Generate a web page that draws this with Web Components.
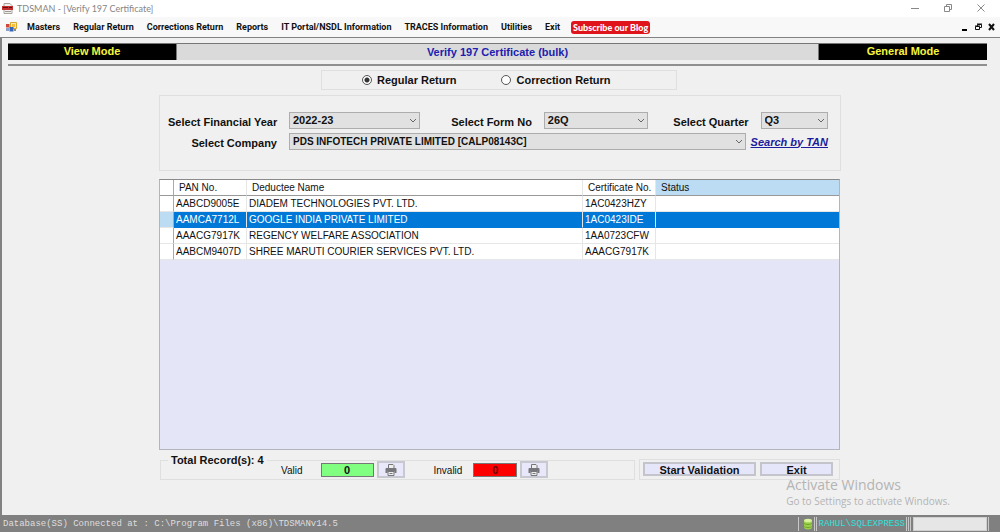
<!DOCTYPE html>
<html lang="en">
<head>
<meta charset="utf-8">
<title>TDSMAN - [Verify 197 Certificate]</title>
<style>
  html, body { margin: 0; }
  body { font: 11px/14px "Liberation Sans", Arial, sans-serif; color: #111; background: #f0f0f0; }
</style>
</head>
<body>
<app-window>
  <title-bar slot="title">TDSMAN - [Verify 197 Certificate]</title-bar>
  <menu-bar slot="menu">
    <menu-item>Masters</menu-item>
    <menu-item>Regular Return</menu-item>
    <menu-item>Corrections Return</menu-item>
    <menu-item>Reports</menu-item>
    <menu-item>IT Portal/NSDL Information</menu-item>
    <menu-item>TRACES Information</menu-item>
    <menu-item>Utilities</menu-item>
    <menu-item>Exit</menu-item>
  </menu-bar>
  <mode-banner>
    <span slot="left">View Mode</span>
    <span slot="heading">Verify 197 Certificate (bulk)</span>
    <span slot="right">General Mode</span>
  </mode-banner>
  <return-type></return-type>
  <filter-panel></filter-panel>
  <certificate-grid></certificate-grid>
  <result-panel></result-panel>
  <status-strip slot="status">Database(SS) Connected at : C:\Program Files (x86)\TDSMANv14.5
    <span slot="server">RAHUL\SQLEXPRESS</span>
  </status-strip>
</app-window>

<script>
const define = (name, html, setup) => {
  const template = document.createElement('template');
  template.innerHTML = html;
  customElements.define(name, class extends HTMLElement {
    constructor() {
      super();
      this.attachShadow({ mode: 'open' }).append(template.content.cloneNode(true));
      if (setup) setup(this, this.shadowRoot);
    }
  });
};

const base = `*{box-sizing:border-box}button{font:inherit;color:inherit;margin:0;padding:0;border:0;background:none}svg{display:block}`;

define('app-window', `
<style>${base}
  :host{display:flex;flex-direction:column;min-height:100vh}
  main{flex:1;display:flex;flex-direction:column;padding:5px 13px 35px 6px;border:solid #828282;border-width:1px 0 0 2px;position:relative}
  aside{position:absolute;right:50px;bottom:7px;color:#b4b4b4;font-family:"Open Sans",sans-serif}
  aside p{margin:0;font-size:10px;line-height:14px}
  aside p:first-child{font-size:14px;line-height:19px}
</style>
<slot name="title"></slot>
<slot name="menu"></slot>
<main>
  <slot></slot>
  <aside><p>Activate Windows</p><p>Go to Settings to activate Windows.</p></aside>
</main>
<slot name="status"></slot>`);

define('title-bar', `
<style>${base}
  :host{display:flex;align-items:center;height:17px;padding:0 14px 0 2px;background:#fff;color:#858585;font:9px/14px Lato,sans-serif}
  .name{flex:1;padding-left:4px}
  .tools{display:flex;gap:23px;padding-bottom:2px}
</style>
<svg width="11" height="11" viewBox="0 0 11 11" aria-hidden="true">
  <path d="M2 0.5h6l2 2v8H2z" fill="#f2f0ee" stroke="#a9a29f"/>
  <path d="M0 3h11v4H0z" fill="#c4302f"/><path d="M1 4.5h5M7 4.5h3" stroke="#5c1414"/>
  <path d="M3 8.5h6" stroke="#999"/>
</svg>
<span class="name"><slot></slot></span>
<div class="tools">
  <button aria-label="Minimize"><svg width="10" height="10" viewBox="0 0 10 10" stroke="#888"><path d="M1 5.5h8"/></svg></button>
  <button aria-label="Restore"><svg width="10" height="10" viewBox="0 0 10 10" fill="none" stroke="#888"><path d="M1.5 3.5h5v5h-5zM3.5 3V1.5h5v5H7"/></svg></button>
  <button aria-label="Close"><svg width="10" height="10" viewBox="0 0 10 10" stroke="#888"><path d="M1.5 1.5l7 7M8.5 1.5l-7 7"/></svg></button>
</div>`);

define('menu-item', `
<style>${base}:host{display:block}button{display:block;white-space:nowrap}</style>
<button><slot></slot></button>`);

define('menu-bar', `
<style>${base}
  :host{display:flex;align-items:center;height:20px;padding:0 4px 0 6px;background:#f8f8f8;font:bold 9px/12px Roboto,sans-serif}
  nav{flex:1;display:flex;align-items:center;gap:13px;padding-left:10px}
  a{padding:0 2px;border-radius:3px;background:#e0141b;color:#fff;text-decoration:none;font:900 9px/13px Lato,sans-serif;margin-left:-2px;white-space:nowrap}
  .tools{display:flex;gap:5px}
</style>
<svg width="11" height="10" viewBox="0 0 11 10" aria-hidden="true">
  <path d="M4.5.5h6v6h-6z" fill="#fbe9b0" stroke="#d9a830"/><path d="M6 2h3v3H6z" fill="#f6c23e"/>
  <path d="M0 2h3.500v3.500H0z" fill="#d0453b"/><path d="M0 6h3v3H0z" fill="#8c9fc4"/><path d="M3.500 5h4v4.500h-4z" fill="#3566bd"/><path d="M8 7h2v2H8z" fill="#8a8a8a"/>
</svg>
<nav><slot></slot><a href="#blog">Subscribe our Blog</a></nav>
<div class="tools">
  <button aria-label="Minimize child window"><svg width="8" height="8" viewBox="0 0 8 8"><path d="M1 6h5v2H1z"/></svg></button>
  <button aria-label="Restore child window"><svg width="9" height="8" viewBox="0 0 9 8" fill="none" stroke="#111"><path d="M1.500 3.500h4v3h-4zM3.500 3V1.500h4v3H6M1 3h5M3 1h5"/></svg></button>
  <button aria-label="Close child window"><svg width="8" height="8" viewBox="0 0 8 8" stroke="#111" stroke-width="2"><path d="M1 1l5 6M6 1L1 7"/></svg></button>
</div>`);

define('mode-banner', `
<style>${base}
  :host{display:block;padding-bottom:4px;border-bottom:2px solid #8f8f8f;font-weight:bold}
  header{display:grid;grid-template-columns:168px 1fr 168px;height:17px;text-align:center;line-height:15px;border:solid #777;border-width:1px 0}
  div{background:#000;color:#f6f63c}
  h1{margin:0;font-size:11px;line-height:16px;background:#dadada;color:#2020b0;border:solid #777;border-width:0 1px}
</style>
<header><div><slot name="left"></slot></div><h1><slot name="heading"></slot></h1><div><slot name="right"></slot></div></header>`);

define('return-type', `
<style>${base}
  :host{display:flex;justify-content:center;margin-top:4px;padding-left:3px}
  form{display:flex;gap:45px;width:356px;height:20px;padding-left:40px;border:1px solid #dfdfdf;font-weight:bold}
  label{display:flex;align-items:center;gap:5px;white-space:nowrap}
  input{appearance:none;width:10px;height:10px;margin:0;border:1px solid #555;border-radius:50%;background:#fff}
  input:checked{background:radial-gradient(circle,#333 0 2px,#fff 3px)}
</style>
<form>
  <label><input type="radio" name="type" checked>Regular Return</label>
  <label><input type="radio" name="type">Correction Return</label>
</form>`);

define('drop-down', `
<style>${base}
  :host{display:grid;min-width:0}
  ::slotted(select){grid-area:1/1}
  svg{grid-area:1/1;place-self:center end;margin-right:3px;pointer-events:none}
</style>
<slot></slot>
<svg width="8" height="6" viewBox="0 0 8 6" fill="none" stroke="#666"><path d="M1 1l3 3 3-3"/></svg>`);

define('filter-panel', `
<style>${base}
  :host{display:block;margin:5px 146px 0 151px}
  form{display:grid;gap:4px;height:76px;padding:16px 12px 0 8px;border:1px solid #dfdfdf;font-weight:bold;align-content:start}
  .row{display:flex;align-items:center}
  label{white-space:nowrap;text-align:right;padding-top:2px}
  .lead{width:109px}
  drop-down{margin-left:12px}
  .year{flex:130}.form{flex:103}.quarter{flex:67}.company{flex:1}
  .next{width:112px}
  .last{width:101px}
  select{appearance:none;width:100%;height:17px;margin:0;padding:0 14px 0 3px;border:1px solid #adadad;border-radius:0;background:#e1e1e1;color:#111;font:bold 11px/15px "Liberation Sans",Arial,sans-serif}
  .company select{font-size:10px}
  a{margin-left:5px;color:#1c1c9c;font-style:italic;white-space:nowrap}
</style>
<form>
  <div class="row">
    <label class="lead" for="year">Select Financial Year</label>
    <drop-down class="year"><select id="year"><option>2022-23</option></select></drop-down>
    <label class="next" for="form">Select Form No</label>
    <drop-down class="form"><select id="form"><option>26Q</option></select></drop-down>
    <label class="last" for="quarter">Select Quarter</label>
    <drop-down class="quarter"><select id="quarter"><option>Q3</option></select></drop-down>
  </div>
  <div class="row">
    <label class="lead" for="company">Select Company</label>
    <drop-down class="company"><select id="company"><option>PDS INFOTECH PRIVATE LIMITED [CALP08143C]</option></select></drop-down>
    <a href="#tan">Search by TAN</a>
  </div>
</form>`);

const records = [
  ['AABCD9005E', 'DIADEM TECHNOLOGIES PVT. LTD.', '1AC0423HZY'],
  ['AAMCA7712L', 'GOOGLE INDIA PRIVATE LIMITED', '1AC0423IDE'],
  ['AAACG7917K', 'REGENCY WELFARE ASSOCIATION', '1AA0723CFW'],
  ['AABCM9407D', 'SHREE MARUTI COURIER SERVICES PVT. LTD.', 'AAACG7917K']
];

define('certificate-grid', `
<style>${base}
  :host{display:block;flex:1;margin:8px 147px 0 151px;border:1px solid #b4b4bc;border-top-color:#8a8a8a;background:#e5e5f8}
  table{width:100%;table-layout:fixed;border-collapse:separate;border-spacing:0;background:#fff;font-size:10px;line-height:15px}
  th,td{height:16px;padding:0 0 0 2px;text-align:left;font-weight:normal;white-space:nowrap;overflow:hidden;border:solid #e6e6e6;border-width:0 1px 1px 0}
  thead th{padding-left:5px;border-bottom-color:#999}
  th:first-child{border-right-color:#aaa}
  thead th:last-child{background:#bcdcf4}
  td:last-child,thead th:last-child{border-right:0}
  tr.on td{background:#0078d7;color:#fff;border-bottom-color:#0078d7}
  tr.on th{background:#bcdcf4}
  .mark{width:14px}.pan{width:73px}.cert{width:73px}.status{width:183px}
</style>
<table>
  <colgroup><col class="mark"><col class="pan"><col><col class="cert"><col class="status"></colgroup>
  <thead><tr><th></th><th>PAN No.</th><th>Deductee Name</th><th>Certificate No.</th><th>Status</th></tr></thead>
  <tbody></tbody>
</table>`, (host, root) => {
  const body = root.querySelector('tbody');
  records.forEach((record, i) => {
    const row = body.insertRow();
    if (i === 1) row.className = 'on';
    const mark = document.createElement('th');
    mark.scope = 'row';
    row.append(mark);
    [...record, ''].forEach(text => { row.insertCell().textContent = text; });
  });
});

define('print-button', `
<style>${base}
  :host{display:block;width:28px}
  button{display:grid;place-items:center;width:100%;height:17px;border:2px solid #c8c8d0;background:#e8e8fa}
</style>
<button aria-label="Print list"><svg width="12" height="12" viewBox="0 0 12 12">
  <path d="M3.500 4V.5h4.500l1 1V4" fill="#eee" stroke="#77777b"/>
  <path d="M1.500 4h9a1 1 0 0 1 1 1v4H9.500V7.500h-7V9H.5V5a1 1 0 0 1 1-1z" fill="#77777b"/>
  <path d="M3 7.500h6v4H3z" fill="#eee" stroke="#77777b"/><path d="M4.500 9.500h3" stroke="#77777b"/>
</svg></button>`);

define('result-panel', `
<style>${base}
  :host{display:flex;align-items:flex-end;gap:4px;height:30px;margin:0 147px 0 152px}
  fieldset{flex:1;min-width:0;height:26px;margin:0;padding:0;border:1px solid #dfdfdf}
  legend{margin-left:7px;padding:0 3px;font-weight:bold;line-height:12px}
  .counts{display:flex;align-items:center;height:17px;margin-top:-5px;padding-left:120px;font-size:10px}
  .counts label{padding-top:3px}
  output{margin:0 3px 0 18px;border:1px solid #777;font:bold 11px/12px "Liberation Sans",Arial,sans-serif;text-align:center}
  #valid{width:53px;background:#80ff80}
  #invalid{width:44px;margin-left:11px;background:#f00;color:#600}
  .second{margin-left:29px}
  .actions{display:flex;gap:4px;height:21px;width:201px;padding:2px 6px 3px 3px;border:1px solid #dfdfdf}
  .actions button{border:2px solid #c4c4cc;background:#e6e6fa;font-weight:bold;line-height:12px}
  .run{flex:114}.exit{flex:72}
</style>
<fieldset>
  <legend>Total Record(s): 4</legend>
  <div class="counts">
    <label for="valid">Valid</label><output id="valid">0</output><print-button></print-button>
    <label class="second" for="invalid">Invalid</label><output id="invalid">0</output><print-button></print-button>
  </div>
</fieldset>
<div class="actions"><button class="run">Start Validation</button><button class="exit">Exit</button></div>`);

define('status-strip', `
<style>${base}
  :host{display:flex;align-items:center;height:17px;padding:0 11px 0 3px;background:#808080;color:#dedede;font:9px/15px "Liberation Mono",monospace;white-space:nowrap}
  .message{flex:1;padding-top:2px}
  .server{display:flex;align-items:center;height:14px;padding-left:4px;border-left:1px solid #c8c8c8;color:#2fe0dc}
  .server slot{display:block;padding:2px 0 0 2px}
  .divider{width:1px;height:14px;margin-left:1px;background:#c8c8c8}
  .progress{width:74px;height:14px;margin-left:2px;background:#e6e6e6;border:1px solid #cfcfcf}
</style>
<span class="message"><slot></slot></span>
<div class="server">
  <svg width="10" height="12" viewBox="0 0 10 12" aria-hidden="true"><path d="M1 2.500v7c0 2.500 8 2.500 8 0v-7z" fill="#9ad04b"/><ellipse cx="5" cy="2.500" rx="4" ry="1.800" fill="#d9f29b"/><path d="M1 5c0 2 8 2 8 0M1 8c0 2 8 2 8 0" fill="none" stroke="#6ea32b"/></svg>
  <i class="divider"></i><i class="divider"></i>
  <slot name="server"></slot>
</div>
<i class="divider"></i><i class="divider"></i><i class="divider"></i>
<div class="progress"></div><i class="divider"></i>`);
</script>
</body>
</html>
